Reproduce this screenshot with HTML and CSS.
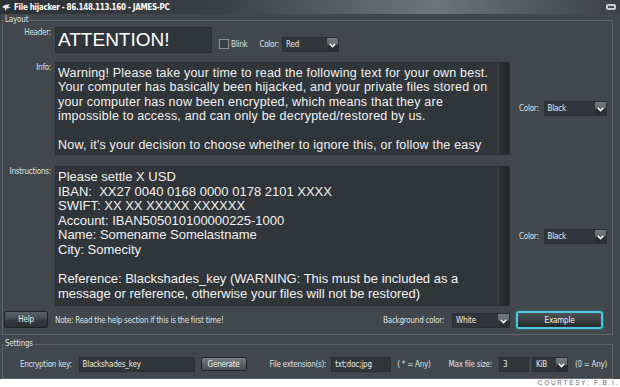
FILE: index.html
```html
<!DOCTYPE html>
<html lang="en">
<head>
    <meta charset="UTF-8">
    <title>File hijacker</title>
    <link rel="stylesheet" href="styles.css">
</head>
<body>
    <div class="window">
        <!-- Title bar -->
        <div class="titlebar">
            <svg class="app-icon" width="9" height="7" viewBox="0 0 9 7"><path d="M0 3 L3 1 L8 0 L6 2.5 L9 3.5 L5 4.5 L3 7 L3 4.5 Z" fill="#e4e8eb"/></svg>
            <span class="title">File hijacker - 86.148.113.160 - JAMES-PC</span>
            <span class="min-btn"></span>
        </div>

        <!-- Layout group -->
        <fieldset class="group layout">
            <legend>Layout</legend>

            <div class="row row-header">
                <span class="field-label">Header:</span>
                <div class="header-controls">
                    <div class="header-box">ATTENTION!</div>
                    <span class="checkbox"></span>
                    <span class="lbl blink">Blink</span>
                    <span class="lbl color-lbl">Color:</span>
                    <div class="select sel-red">
                        <span class="sel-text">Red</span>
                        <span class="arrow"><svg width="7" height="5" viewBox="0 0 7 5"><path d="M0.8 0.8 L3.5 3.6 L6.2 0.8" fill="none" stroke="#fff" stroke-width="1.6"/></svg></span>
                    </div>
                </div>
            </div>

            <div class="row row-info">
                <span class="field-label">Info:</span>
                <div class="textarea">
                    <div class="text info-text">Warning! Please take your time to read the following text for your own best.<br>Your computer has basically been hijacked, and your private files stored on<br>your computer has now been encrypted, which means that they are<br>impossible to access, and can only be decrypted/restored by us.<br><br>Now, it's your decision to choose whether to ignore this, or follow the easy</div>
                    <div class="scroll"></div>
                </div>
                <div class="side">
                    <span class="lbl">Color:</span>
                    <div class="select sel-side">
                        <span class="sel-text">Black</span>
                        <span class="arrow"><svg width="7" height="5" viewBox="0 0 7 5"><path d="M0.8 0.8 L3.5 3.6 L6.2 0.8" fill="none" stroke="#fff" stroke-width="1.6"/></svg></span>
                    </div>
                </div>
            </div>

            <div class="row row-instr">
                <span class="field-label">Instructions:</span>
                <div class="textarea">
                    <div class="text instr-text">Please settle X USD<br>IBAN:&nbsp; XX27 0040 0168 0000 0178 2101 XXXX<br>SWIFT: XX XX XXXXX XXXXXX<br>Account: IBAN505010100000225-1000<br>Name: Somename Somelastname<br>City: Somecity<br><br>Reference: Blackshades_key (WARNING: This must be included as a<br>message or reference, otherwise your files will not be restored)</div>
                    <div class="scroll"></div>
                </div>
                <div class="side">
                    <span class="lbl">Color:</span>
                    <div class="select sel-side">
                        <span class="sel-text">Black</span>
                        <span class="arrow"><svg width="7" height="5" viewBox="0 0 7 5"><path d="M0.8 0.8 L3.5 3.6 L6.2 0.8" fill="none" stroke="#fff" stroke-width="1.6"/></svg></span>
                    </div>
                </div>
            </div>

            <div class="row row-bottom">
                <button class="btn help">Help</button>
                <div class="bottom-mid">
                    <span class="lbl note">Note: Read the help section if this is the first time!</span>
                    <span class="lbl bg-lbl">Background color:</span>
                    <div class="select sel-white">
                        <span class="sel-text">White</span>
                        <span class="arrow"><svg width="7" height="5" viewBox="0 0 7 5"><path d="M0.8 0.8 L3.5 3.6 L6.2 0.8" fill="none" stroke="#fff" stroke-width="1.6"/></svg></span>
                    </div>
                </div>
                <div class="side">
                    <button class="btn example">Example</button>
                </div>
            </div>
        </fieldset>

        <!-- Settings group -->
        <fieldset class="group settings">
            <legend>Settings</legend>
            <div class="settings-row">
                <span class="lbl key-lbl">Encryption key:</span>
                <div class="input key-input">Blackshades_key</div>
                <button class="btn generate">Generate</button>
                <span class="lbl ext-lbl">File extension(s):</span>
                <div class="input ext-input">txt;doc;jpg</div>
                <span class="lbl any-lbl">( * = Any)</span>
                <span class="lbl size-lbl">Max file size:</span>
                <div class="input size-input">3</div>
                <div class="select sel-kib">
                    <span class="sel-text">KiB</span>
                    <span class="arrow"><svg width="7" height="5" viewBox="0 0 7 5"><path d="M0.8 0.8 L3.5 3.6 L6.2 0.8" fill="none" stroke="#fff" stroke-width="1.6"/></svg></span>
                </div>
                <span class="lbl zero-lbl">(0 = Any)</span>
            </div>
        </fieldset>
    </div>
    <div class="credit">COURTESY: F.B.I.</div>
</body>
</html>
```

FILE: styles.css
```css
* {
    box-sizing: border-box;
}
body {
    margin: 0;
    width: 620px;
    height: 387px;
    overflow: hidden;
    background: #fff;
    font-family: "Liberation Sans Narrow", "DejaVu Sans Condensed", "Liberation Sans", sans-serif;
}
.window {
    height: 379px;
    overflow: hidden;
    background: #41474c;
    display: flex;
    flex-direction: column;
}

/* Title bar */
.titlebar {
    height: 14px;
    flex: none;
    display: flex;
    align-items: center;
    padding-left: 2px;
    background: linear-gradient(90deg, #2c3135 0%, #394045 35%, #5f666c 60%, #6e747a 70%, #545a60 85%, #3b4045 100%);
}
.app-icon {
    flex: none;
}
.title {
    color: #fff;
    font-weight: bold;
    font-size: 8px;
    margin-left: 3px;
    letter-spacing: -0.3px;
}
.min-btn {
    margin-left: auto;
    margin-right: 4px;
    width: 10px;
    height: 6px;
    border-radius: 2px;
    background: #c9cdd1;
    position: relative;
}
.min-btn::after {
    content: '';
    position: absolute;
    left: 2px;
    right: 2px;
    top: 2px;
    height: 2px;
    background: #4a5056;
}

/* Group boxes */
.group {
    margin: 1px 7px 0 2px;
    padding: 2px 1px 5px 1px;
    border: 1px solid #5c6368;
    min-width: 0;
}
.group legend {
    padding: 0 1px;
    font-size: 8px;
    letter-spacing: -0.2px;
    line-height: 10px;
    color: #dde1e4;
}
.settings {
    margin-top: 4px;
    padding-top: 7px;
    flex: 1;
}

.lbl, .field-label {
    font-size: 8px;
    letter-spacing: -0.25px;
    color: #dfe3e6;
    white-space: nowrap;
}

/* Layout rows */
.row {
    display: grid;
    grid-template-columns: 47px 455px 1fr;
    column-gap: 4px;
}
.field-label {
    text-align: right;
    padding-top: 1px;
}
.row-header { height: 26px; }
.row-info { height: 93px; margin-top: 9px; }
.row-instr { height: 140px; margin-top: 11px; }
.row-bottom { height: 18px; margin-top: 5px; }

.header-controls {
    display: flex;
    align-items: flex-end;
}
.header-box {
    width: 157px;
    height: 26px;
    background: #30353a;
    border: 1px solid #2a2e32;
    color: #fff;
    font-family: "Liberation Sans", Arial, sans-serif;
    font-size: 19px;
    line-height: 24px;
    padding-left: 2px;
}
.checkbox {
    width: 10px;
    height: 10px;
    margin: 0 0 4px 7px;
    border: 1px solid #8c9298;
    background: #3a3f44;
}
.blink {
    margin: 0 0 4px 2px;
}
.color-lbl {
    margin: 0 0 4px 12px;
}
.sel-red {
    width: 57px;
    margin: 0 0 1px 3px;
}

.textarea {
    display: flex;
    background: #30353a;
    border: 1px solid #2b2f33;
    overflow: hidden;
}
.text {
    flex: 1;
    color: #f2f2f2;
    font-family: "Liberation Sans", Arial, sans-serif;
    white-space: nowrap;
    overflow: hidden;
    padding-left: 2px;
}
.info-text {
    font-size: 12.5px;
    letter-spacing: 0.2px;
    line-height: 14.4px;
    padding-top: 3px;
}
.instr-text {
    font-size: 13px;
    line-height: 14.6px;
    padding-top: 3px;
}
.scroll {
    width: 12px;
    flex: none;
    background: linear-gradient(90deg, #3e4449 0, #2c3034 25%, #25292c 100%);
}

.side {
    display: flex;
    align-items: center;
    padding-left: 5px;
    gap: 5px;
}

/* Selects */
.select {
    display: flex;
    height: 15px;
    background: #30353a;
    border: 1px solid #2b2f33;
    flex: none;
}
.sel-text {
    flex: 1;
    font-size: 8px;
    letter-spacing: -0.2px;
    color: #e8ebee;
    line-height: 14px;
    padding-left: 3px;
}
.arrow {
    width: 11px;
    display: flex;
    align-items: flex-end;
    justify-content: center;
    padding-bottom: 3px;
    background: linear-gradient(#737a80 0, #646a70 45%, #2f3337 55%, #2a2e32 100%);
}
.sel-side {
    width: 63px;
}
.sel-white {
    width: 58px;
    margin-left: 8px;
}
.sel-kib {
    width: 36px;
    margin-left: 3px;
}

/* Bottom row */
.bottom-mid {
    display: flex;
    align-items: center;
}
.bg-lbl {
    margin-left: auto;
}
.btn {
    font-family: inherit;
    font-size: 8px;
    letter-spacing: -0.2px;
    color: #eceff1;
    border: 1px solid #202427;
    border-radius: 2px;
    background: linear-gradient(#5c6268 0, #454b50 45%, #33383c 55%, #2c3034 100%);
    padding: 0;
}
.help {
    width: 44px;
    height: 17px;
}
.example {
    width: 87px;
    height: 18px;
    margin-left: -3px;
    border: 2px solid #4cc9da;
    border-radius: 3px;
    box-shadow: 0 0 2px #2fa9bb;
    background: linear-gradient(#4a5055 0, #3a3f44 50%, #262a2e 100%);
}

/* Settings row */
.settings-row {
    display: flex;
    align-items: center;
    height: 16px;
    padding-left: 16px;
}
.input {
    height: 15px;
    background: #30353a;
    border: 1px solid #2b2f33;
    font-size: 8px;
    letter-spacing: -0.2px;
    color: #e8ebee;
    line-height: 14px;
    padding-left: 3px;
}
.key-input { width: 116px; margin-left: 7px; }
.generate {
    width: 46px;
    height: 14px;
    margin-left: 6px;
    background: linear-gradient(#7a8086 0, #5d6369 50%, #464c51 100%);
}
.ext-lbl { margin-left: 23px; }
.ext-input { width: 60px; margin-left: 5px; }
.any-lbl { margin-left: 6px; }
.size-lbl { margin-left: 18px; }
.size-input { width: 30px; margin-left: 7px; }
.zero-lbl { margin-left: 7px; }

/* Credit strip */
.credit {
    height: 8px;
    text-align: right;
    font-family: "Liberation Sans", Arial, sans-serif;
    font-size: 6.5px;
    line-height: 8px;
    letter-spacing: 1.7px;
    color: #666;
    padding-right: 1px;
}
```
